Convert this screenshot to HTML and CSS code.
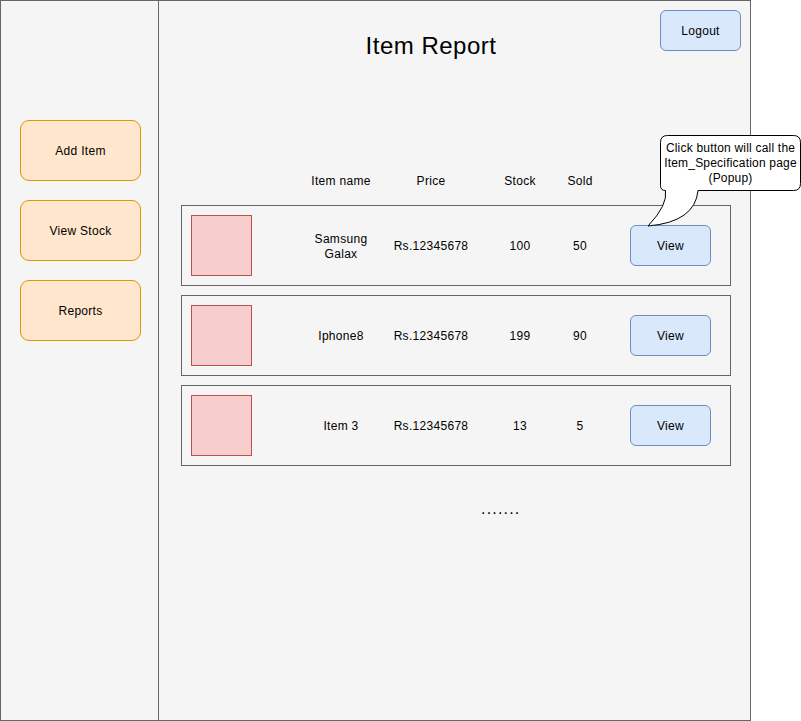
FILE: index.html
```html
<!DOCTYPE html>
<html lang="en">
<head>
<meta charset="utf-8">
<title>Item Report</title>
<link rel="stylesheet" href="styles.css">
</head>
<body>
<div class="frame">
  <aside class="sidebar">
    <div class="side-btn">Add Item</div>
    <div class="side-btn">View Stock</div>
    <div class="side-btn">Reports</div>
  </aside>
  <main class="main">
    <header class="top">
      <h1 class="title">Item Report</h1>
      <div class="blue-btn logout">Logout</div>
    </header>
    <div class="cols head-row">
      <div class="thumb-space"></div>
      <div class="c-name">Item name</div>
      <div class="c-price">Price</div>
      <div class="c-stock">Stock</div>
      <div class="c-sold">Sold</div>
    </div>
    <div class="cols item-row">
      <div class="thumb"></div>
      <div class="c-name">Samsung<br>Galax</div>
      <div class="c-price">Rs.12345678</div>
      <div class="c-stock">100</div>
      <div class="c-sold">50</div>
      <div class="blue-btn view">View</div>
    </div>
    <div class="cols item-row">
      <div class="thumb"></div>
      <div class="c-name">Iphone8</div>
      <div class="c-price">Rs.12345678</div>
      <div class="c-stock">199</div>
      <div class="c-sold">90</div>
      <div class="blue-btn view">View</div>
    </div>
    <div class="cols item-row">
      <div class="thumb"></div>
      <div class="c-name">Item 3</div>
      <div class="c-price">Rs.12345678</div>
      <div class="c-stock">13</div>
      <div class="c-sold">5</div>
      <div class="blue-btn view">View</div>
    </div>
    <div class="more">.......</div>
  </main>
  <div class="callout">
    <svg class="callout-shape" width="161" height="100" viewBox="0 0 161 100">
      <path d="M 27.5,5.5 H 153.5 Q 160.5,5.5 160.5,12.5 V 53.5 Q 160.5,60.5 153.5,60.5 H 58 Q 55,92 8,96 Q 28,75 25.5,60.5 Q 20.5,60.5 20.5,55.5 V 12.5 Q 20.5,5.5 27.5,5.5 Z" fill="#ffffff" stroke="#000000" stroke-width="1"/>
    </svg>
    <div class="callout-text">Click button will call the<br>Item_Specification page<br>(Popup)</div>
  </div>
</div>
</body>
</html>
```

FILE: styles.css
```css
html, body {
  margin: 0;
  padding: 0;
  background: #ffffff;
  overflow: hidden;
}

body {
  font-family: "Liberation Sans", Arial, Helvetica, sans-serif;
  font-size: 12px;
  line-height: 15px;
  letter-spacing: 0.3px;
  color: #000000;
}

.frame {
  position: relative;
  box-sizing: border-box;
  width: 751px;
  height: 721px;
  border: 1px solid #666666;
  background: #f5f5f5;
  display: flex;
}

.sidebar {
  box-sizing: border-box;
  width: 158px;
  flex: none;
  border-right: 1px solid #666666;
  padding: 119px 0 0 19px;
  display: flex;
  flex-direction: column;
  gap: 19px;
}

.side-btn {
  box-sizing: border-box;
  width: 121px;
  height: 61px;
  padding-top: 2px;
  border: 1px solid #d79b00;
  border-radius: 9px;
  background: #ffe6cc;
  display: flex;
  align-items: center;
  justify-content: center;
}

.main {
  flex: 1;
  display: flex;
  flex-direction: column;
  min-width: 0;
}

.top {
  display: flex;
  align-items: flex-start;
  padding-top: 9px;
  height: 50px;
}

.title {
  margin: 22px 0 0 172px;
  width: 200px;
  text-align: center;
  font-size: 24px;
  line-height: 28px;
  letter-spacing: 0.5px;
  font-weight: normal;
}

.blue-btn {
  box-sizing: border-box;
  width: 81px;
  height: 41px;
  padding-top: 2px;
  border: 1px solid #6c8ebf;
  border-radius: 6px;
  background: #dae8fc;
  display: flex;
  align-items: center;
  justify-content: center;
  flex: none;
}

.logout {
  margin-left: auto;
  margin-right: 9px;
}

.cols {
  box-sizing: border-box;
  width: 550px;
  margin-left: 22px;
  padding-left: 9px;
  display: flex;
  align-items: center;
  border: 1px solid transparent;
}

.head-row {
  margin-top: 113px;
}

.item-row {
  height: 81px;
  border-color: #666666;
  margin-top: 9px;
}

.head-row + .item-row {
  margin-top: 15px;
}

.item-row .c-name,
.item-row .c-price,
.item-row .c-stock,
.item-row .c-sold {
  padding-top: 2px;
}

.thumb,
.thumb-space {
  box-sizing: border-box;
  width: 61px;
  flex: none;
}

.thumb {
  height: 61px;
  border: 1px solid #b85450;
  background: #f8cecc;
}

.c-name {
  width: 100px;
  margin-left: 39px;
  text-align: center;
  flex: none;
}

.c-price {
  width: 80px;
  text-align: center;
  flex: none;
}

.c-stock {
  width: 60px;
  margin-left: 19px;
  text-align: center;
  flex: none;
}

.c-sold {
  width: 60px;
  text-align: center;
  flex: none;
}

.view {
  margin-left: 20px;
}

.more {
  margin-top: 34px;
  padding-left: 322px;
  font-size: 16px;
  line-height: 18px;
  letter-spacing: 1.2px;
}

.callout {
  position: absolute;
  left: 639px;
  top: 129px;
  width: 161px;
  height: 100px;
}

.callout-shape {
  display: block;
}

.callout-text {
  position: absolute;
  left: 20px;
  top: 5px;
  width: 141px;
  height: 56px;
  display: flex;
  align-items: center;
  justify-content: center;
  text-align: center;
  line-height: 15px;
  letter-spacing: 0.2px;
}
```
